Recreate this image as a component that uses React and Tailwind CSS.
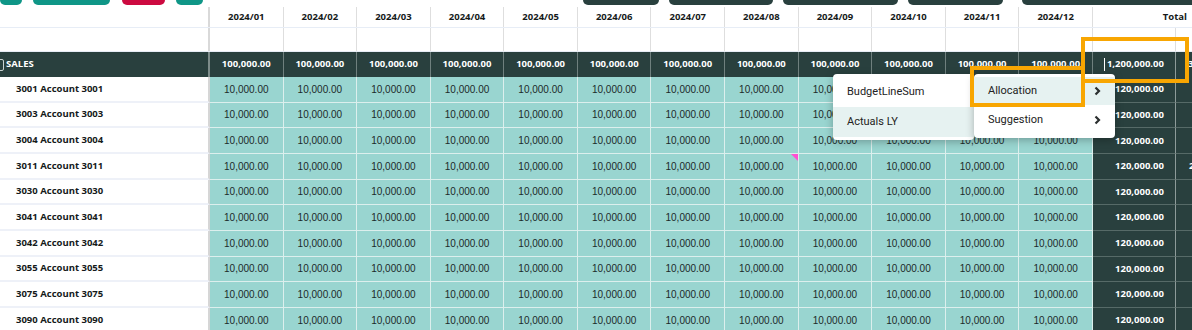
import React from 'react';

const months = ['2024/01', '2024/02', '2024/03', '2024/04', '2024/05', '2024/06', '2024/07', '2024/08', '2024/09', '2024/10', '2024/11', '2024/12'];

const accounts = [
  { name: '3001 Account 3001' },
  { name: '3003 Account 3003' },
  { name: '3004 Account 3004' },
  { name: '3011 Account 3011', extra: '240,000.00', flag: 7 },
  { name: '3030 Account 3030' },
  { name: '3041 Account 3041' },
  { name: '3042 Account 3042' },
  { name: '3055 Account 3055' },
  { name: '3075 Account 3075' },
  { name: '3090 Account 3090' },
];

function Chevron() {
  return (
    <svg width="7" height="10" viewBox="0 0 7 10" className="shrink-0">
      <polyline points="1.5,1.5 5,5 1.5,8.5" fill="none" stroke="#2b2f2f" strokeWidth="2.2" />
    </svg>
  );
}

function Toolbar() {
  return (
    <div className="h-[7px] flex items-start">
      <div className="h-[5px] w-[22px] bg-[#0f9687] rounded-b-[6px]" />
      <div className="h-[5px] w-[77px] ml-[11px] bg-[#0f9687] rounded-b-[6px]" />
      <div className="h-[5px] w-[43px] ml-[12px] bg-[#cc0a40] rounded-b-[6px]" />
      <div className="h-[5px] w-[27px] ml-[11px] bg-[#0f9687] rounded-b-[6px]" />
      <div className="h-[5px] w-[76px] ml-[380px] bg-[#29403e] rounded-b-[6px]" />
      <div className="h-[5px] w-[104px] ml-[10px] bg-[#29403e] rounded-b-[6px]" />
      <div className="h-[5px] w-[115px] ml-[10px] bg-[#29403e] rounded-b-[6px]" />
      <div className="h-[5px] w-[95px] ml-[10px] bg-[#29403e] rounded-b-[6px]" />
      <div className="h-[5px] flex-1 ml-[19px] bg-[#29403e] rounded-bl-[6px]" />
    </div>
  );
}

export default function App() {
  return (
    <div className="relative w-[1192px] h-[330px] overflow-hidden bg-white font-['Open_Sans',sans-serif] text-[9.5px] text-[#151a1a]">
      <Toolbar />

      {/* header row: months */}
      <div className="flex h-[21px] border-b border-[#e7edf6]">
        <div className="w-[210px] shrink-0 border-r-2 border-[#d9d9d9]" />
        {months.map((m) => (
          <div key={m} className="w-[73.58px] shrink-0 border-r border-[#dedede] flex items-center justify-center font-bold">
            {m}
          </div>
        ))}
        <div className="flex-1 flex items-center justify-end pr-[5px] font-bold">Total</div>
      </div>

      {/* header row: blank */}
      <div className="flex h-[24px] border-b border-[#e7edf6]">
        <div className="w-[210px] shrink-0 border-r-2 border-[#d9d9d9]" />
        {months.map((m) => (
          <div key={m} className="w-[73.58px] shrink-0 border-r border-[#dedede]" />
        ))}
        <div className="w-[83px] shrink-0 border-r border-[#dedede]" />
        <div className="flex-1" />
      </div>

      {/* SALES row */}
      <div className="flex h-[25px] bg-[#29403e] text-white font-bold">
        <div className="w-[210px] shrink-0 border-r-2 border-[#7d8c8a] flex items-center">
          <div className="w-[12px] h-[12px] -ml-[8px] mr-[2px] border border-[#c9d2d1] rounded-[2px]" />
          <span>SALES</span>
        </div>
        {months.map((m) => (
          <div key={m} className="w-[73.58px] shrink-0 border-r border-[#6f807e] flex items-center justify-center">
            100,000.00
          </div>
        ))}
        <div className="w-[83px] shrink-0 border-r border-[#8d9b99] flex items-center justify-end pr-[11px]">
          <span className="w-px h-[13px] bg-white mr-[2px]" />
          1,200,000.00
        </div>
        <div className="flex-1 flex items-center pl-[12px] whitespace-nowrap overflow-hidden">3,600,000.00</div>
      </div>

      {/* account rows */}
      {accounts.map((a, r) => (
        <div key={a.name} className="flex h-[25.67px]">
          <div className="w-[210px] shrink-0 border-r-2 border-[#d6d6d6] border-b-2 border-b-[#eef1f8] flex items-center pl-[16px] font-bold">
            {a.name}
          </div>
          {months.map((m, i) => (
            <div
              key={m}
              className="relative w-[73.58px] shrink-0 bg-[#99d5d0] border-r border-b border-[#dcefed] flex items-center justify-center font-['Liberation_Sans',sans-serif] text-[10px] text-[#1c2a2a]"
            >
              10,000.00
              {a.flag === i && (
                <svg width="7" height="7" viewBox="0 0 7 7" className="absolute top-0 right-0">
                  <polygon points="0,0 7,0 7,7" fill="#ff4fd1" />
                </svg>
              )}
            </div>
          ))}
          <div className="w-[83px] shrink-0 bg-[#29403e] border-r border-[#8d9b99] border-b border-b-[#566a67] flex items-center justify-end pr-[11px] text-white font-bold">
            120,000.00
          </div>
          <div className="flex-1 bg-[#29403e] border-b border-[#566a67] flex items-center pl-[13px] whitespace-nowrap overflow-hidden text-white font-bold">
            {a.extra || ''}
          </div>
        </div>
      ))}

      {/* context menu */}
      <div className="absolute left-[833px] top-[74px] w-[141px] py-[3px] bg-white rounded-[4px] shadow-[0_2px_8px_rgba(0,0,0,0.28)] font-['Roboto',sans-serif] text-[11px] text-[#222]">
        <div className="h-[30px] flex items-center pl-[14px]">BudgetLineSum</div>
        <div className="h-[30px] flex items-center pl-[14px] bg-[#e6f2f1]">Actuals LY</div>
      </div>
      <div className="absolute left-[974px] top-[74px] w-[141px] py-[3px] bg-white rounded-[4px] shadow-[0_2px_8px_rgba(0,0,0,0.28)] font-['Roboto',sans-serif] text-[11px] text-[#222]">
        <div className="h-[28px] flex items-center justify-between pl-[14px] pr-[14px] bg-[#e6f2f1]">
          <span>Allocation</span>
          <Chevron />
        </div>
        <div className="h-[30px] flex items-center justify-between pl-[14px] pr-[14px]">
          <span>Suggestion</span>
          <Chevron />
        </div>
      </div>

      {/* highlight annotations */}
      <div className="absolute left-[1081px] top-[37px] w-[108px] h-[46px] border-4 border-[#f8a602]" />
      <div className="absolute left-[970px] top-[66px] w-[115px] h-[41px] border-4 border-[#f8a602]" />
    </div>
  );
}
